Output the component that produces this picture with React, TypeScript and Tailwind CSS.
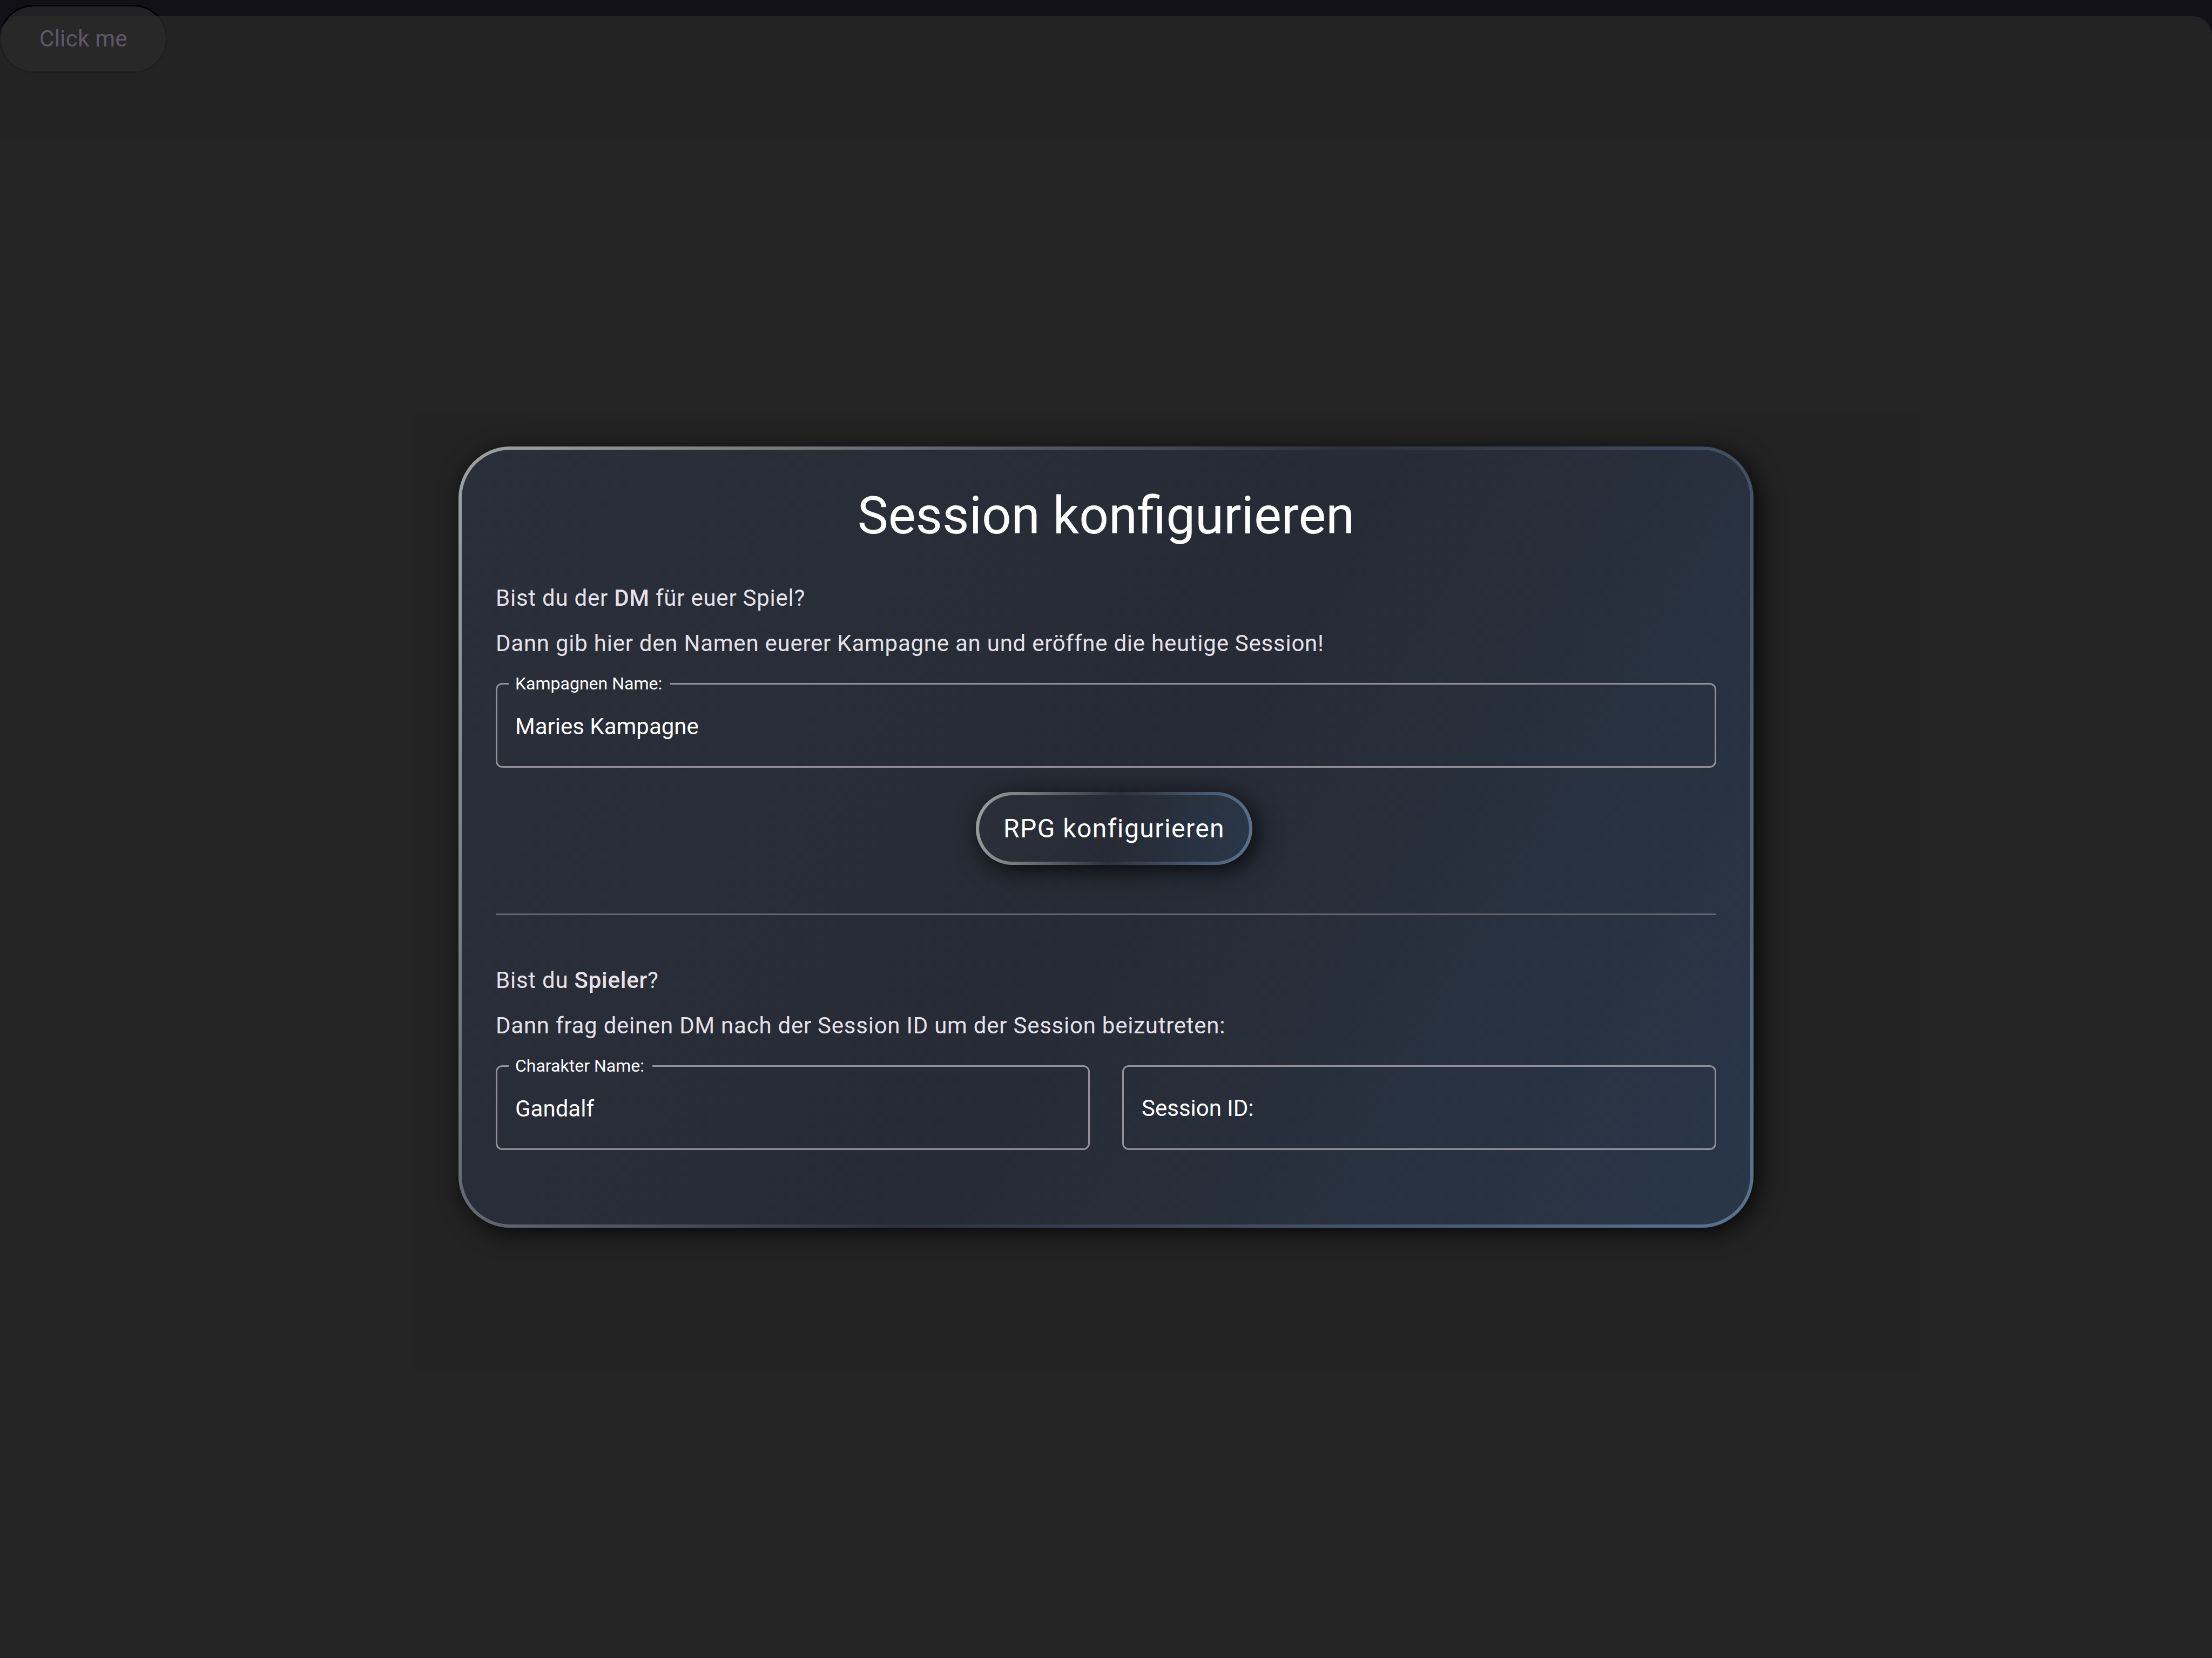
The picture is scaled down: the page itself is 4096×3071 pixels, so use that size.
import React, { useId } from "react";

function OutlinedField({
  label,
  defaultValue,
}: {
  label: string;
  defaultValue?: string;
}) {
  const id = useId();
  const inputClass =
    "h-[124px] w-full bg-transparent px-[12px] text-[42px] text-white outline-none placeholder:text-white";

  if (!defaultValue) {
    return (
      <div className="mt-[15px] h-[157px] min-w-0 flex-1 rounded-[12px] border-[3px] border-[#938f99] px-[21px] pt-[14px]">
        <input id={id} type="text" placeholder={label} aria-label={label} className={inputClass} />
      </div>
    );
  }

  return (
    <fieldset className="h-[172px] min-w-0 flex-1 rounded-[12px] border-[3px] border-[#938f99] px-[21px]">
      <legend className="pr-[15px] pl-[12px] text-[32px] leading-[33px] text-white">
        <label htmlFor={id} className="block">
          {label}
        </label>
      </legend>
      <input id={id} type="text" defaultValue={defaultValue} className={inputClass} />
    </fieldset>
  );
}

export default function App() {
  return (
    <div className="relative flex min-h-screen flex-col bg-[#131118] font-['Roboto',sans-serif]">
      <button
        type="button"
        className="absolute top-[9px] left-[-1px] rounded-full border-[3px] border-black bg-[#222226] px-[71px] py-[30px] text-[42px] leading-[60px] tracking-[0.007em] text-[#ddccff]"
      >
        Click me
      </button>

      <main className="relative mt-[30px] flex flex-1 flex-col items-center justify-center rounded-t-[36px] bg-[#2b2b2a]/72 px-[48px]">
        <section className="w-full max-w-[2398px] rounded-[96px] border-[6px] border-transparent px-[63px] pt-[62px] pb-[138px] shadow-[9px_9px_45px_rgba(0,0,0,0.8)] [background:linear-gradient(120deg,#2b2f39,#272b35_53%,#293749)_padding-box,linear-gradient(120deg,#9ea2a2,#2e313d_51%,#5a7490)_border-box]">
          <h1 className="text-center text-[96px] leading-[120px] text-white">
            Session konfigurieren
          </h1>

          <div className="mt-[51px] text-[42px] leading-[84px] tracking-[0.018em] text-[#e6e1e9]">
            <p>
              Bist du der <strong className="font-medium">DM</strong> für euer Spiel?
            </p>
            <p>
              Dann gib hier den Namen euerer Kampagne an und eröffne die heutige Session!
            </p>
          </div>

          <div className="mt-[16px] flex">
            <OutlinedField label="Kampagnen Name:" defaultValue="Maries Kampagne" />
          </div>

          <div className="mt-[45px] flex justify-center pl-[30px]">
            <button
              type="button"
              className="rounded-full border-[6px] border-transparent px-[45px] py-[30px] text-[48px] leading-[63px] tracking-[0.03em] text-white shadow-[9px_9px_45px_rgba(0,0,0,0.8)] [background:linear-gradient(100deg,#2b2f39,#272b35_50%,#293749)_padding-box,linear-gradient(100deg,#9ea2a2,#2e313d_50%,#5a7490)_border-box]"
            >
              RPG konfigurieren
            </button>
          </div>

          <hr className="mt-[90px] border-t-[3px] border-[#65666f]" />

          <div className="mt-[79px] text-[42px] leading-[84px] tracking-[0.018em] text-[#e6e1e9]">
            <p>
              Bist du <strong className="font-medium">Spieler</strong>?
            </p>
            <p>Dann frag deinen DM nach der Session ID um der Session beizutreten:</p>
          </div>

          <div className="mt-[16px] flex gap-[60px]">
            <OutlinedField label="Charakter Name:" defaultValue="Gandalf" />
            <OutlinedField label="Session ID:" />
          </div>
        </section>
      </main>
    </div>
  );
}
